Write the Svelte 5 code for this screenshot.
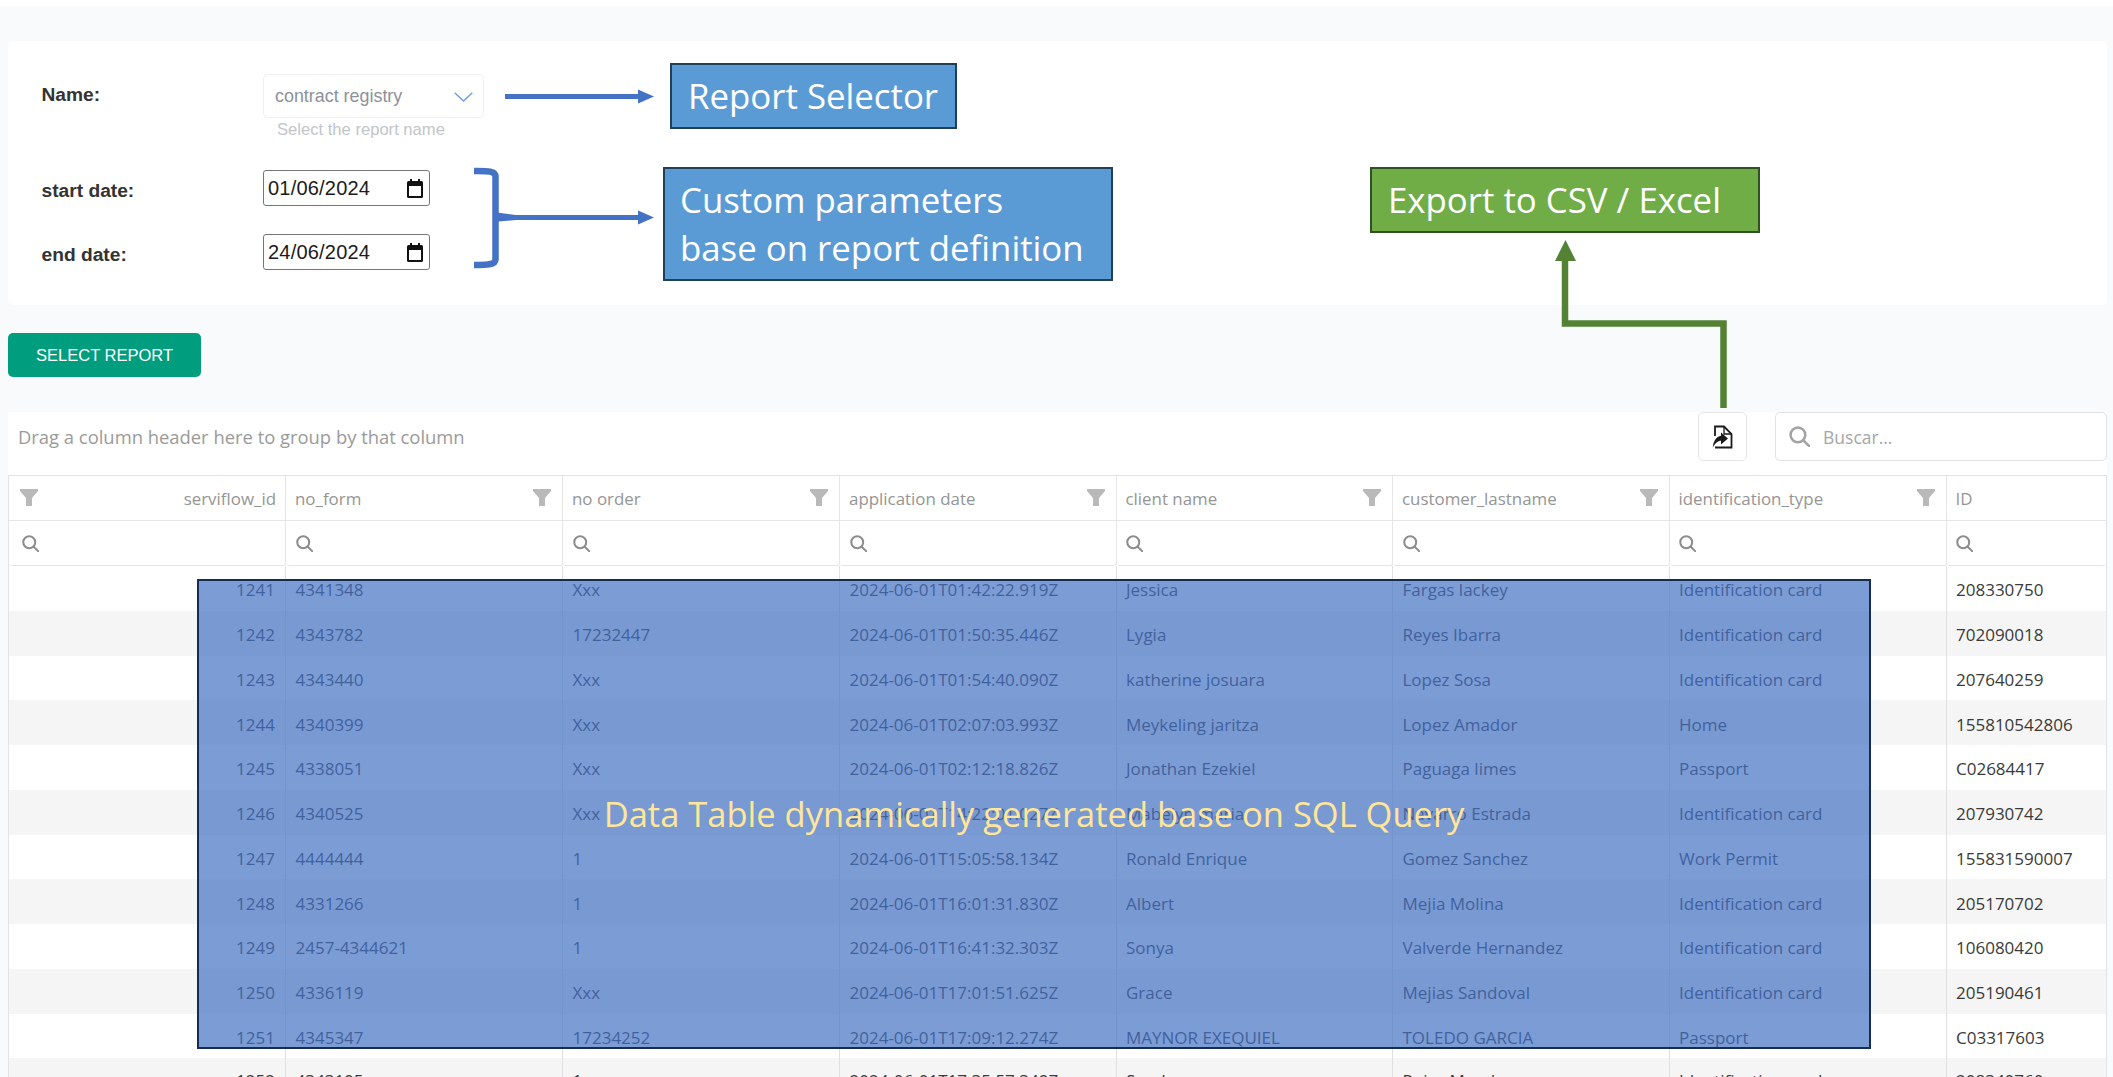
<script>
  const columns = [
    { name: 'serviflow_id', end: true },
    { name: 'no_form' },
    { name: 'no order' },
    { name: 'application date' },
    { name: 'client name' },
    { name: 'customer_lastname' },
    { name: 'identification_type' },
    { name: 'ID', plain: true }
  ];
  const rows = [
    ['1241','4341348','Xxx','2024-06-01T01:42:22.919Z','Jessica','Fargas lackey','Identification card','208330750'],
    ['1242','4343782','17232447','2024-06-01T01:50:35.446Z','Lygia','Reyes Ibarra','Identification card','702090018'],
    ['1243','4343440','Xxx','2024-06-01T01:54:40.090Z','katherine josuara','Lopez Sosa','Identification card','207640259'],
    ['1244','4340399','Xxx','2024-06-01T02:07:03.993Z','Meykeling jaritza','Lopez Amador','Home','155810542806'],
    ['1245','4338051','Xxx','2024-06-01T02:12:18.826Z','Jonathan Ezekiel','Paguaga limes','Passport','C02684417'],
    ['1246','4340525','Xxx','2024-06-01T14:22:01.027Z','Mabelyn maria','Navarro Estrada','Identification card','207930742'],
    ['1247','4444444','1','2024-06-01T15:05:58.134Z','Ronald Enrique','Gomez Sanchez','Work Permit','155831590007'],
    ['1248','4331266','1','2024-06-01T16:01:31.830Z','Albert','Mejia Molina','Identification card','205170702'],
    ['1249','2457-4344621','1','2024-06-01T16:41:32.303Z','Sonya','Valverde Hernandez','Identification card','106080420'],
    ['1250','4336119','Xxx','2024-06-01T17:01:51.625Z','Grace','Mejias Sandoval','Identification card','205190461'],
    ['1251','4345347','17234252','2024-06-01T17:09:12.274Z','MAYNOR EXEQUIEL','TOLEDO GARCIA','Passport','C03317603'],
    ['1252','4343105','1','2024-06-01T17:35:57.349Z','Sandra','Rojas Mendez','Identification card','208340760']
  ];
</script>

{#snippet search(size)}
  <svg class="mag" width={size} height={size} viewBox="0 0 20 20" fill="none" stroke="currentColor" stroke-width="2.4">
    <circle cx="8.5" cy="8.5" r="7" />
    <path d="M13.5 13.5 L19 19" stroke-linecap="round" />
  </svg>
{/snippet}

{#snippet funnel()}
  <svg class="funnel" width="18" height="17" viewBox="0 0 18 17"><path d="M0 0H18V2L12 9V17H6V9L0 2Z" /></svg>
{/snippet}

{#snippet calendar()}
  <svg class="cal" width="16" height="19" viewBox="0 0 16 19">
    <path d="M3 0h2v2h6V0h2v2h1.5A1.5 1.5 0 0 1 16 3.500V17.500A1.500 1.500 0 0 1 14.500 19H1.500A1.500 1.500 0 0 1 0 17.500V3.500A1.500 1.500 0 0 1 1.500 2H3ZM2 7V17H14V7Z" />
  </svg>
{/snippet}

<div class="page">
  <main class="content">
    <section class="card">
      <div class="label">Name:</div>
      <div>
        <div class="select">
          <span>contract registry</span>
          <svg width="19" height="10" viewBox="0 0 19 10" fill="none" stroke="#6a9fdf" stroke-width="1.400"><path d="M.7.7 9.500 9 18.300.7" /></svg>
        </div>
        <div class="hint">Select the report name</div>
      </div>
      <div class="label">start date:</div>
      <div class="date"><span>01/06/2024</span>{@render calendar()}</div>
      <div class="label">end date:</div>
      <div class="date"><span>24/06/2024</span>{@render calendar()}</div>
    </section>

    <button class="report-btn">SELECT REPORT</button>

    <section class="grid-wrap">
      <div class="toolbar">
        <div class="group-hint">Drag a column header here to group by that column</div>
        <button class="export" aria-label="Export">
          <svg width="21" height="24" viewBox="0 0 21 24">
            <path d="M3 11V1.500H12L19.500 9V22.500H3" fill="none" stroke="#1a1a1a" stroke-width="1.800" />
            <path d="M12 1.500V9H19.500" fill="none" stroke="#1a1a1a" stroke-width="1.300" />
            <path d="M9 7.500 16 13.500 9 19.500V15.800C6 15.800 3 18 .8 22.800 1.200 16 4.500 11.500 9 10.800Z" fill="#1a1a1a" />
          </svg>
        </button>
        <div class="searchbox">
          {@render search(21)}
          <span>Buscar...</span>
        </div>
      </div>

      <div class="table">
        <div class="tr head">
          {#each columns as c}
            <div class="th" class:end={c.end}>
              <span class="th-name">{c.name}</span>
              {#if !c.plain}{@render funnel()}{/if}
            </div>
          {/each}
        </div>
        <div class="tr filters">
          {#each columns as c}
            <div class="fc">{@render search(17)}</div>
          {/each}
        </div>
        {#each rows as row, i}
          <div class="tr body" class:alt={i % 2 === 1}>
            {#each row as cell, j}
              <div class="td" class:right={j === 0}>{cell}</div>
            {/each}
          </div>
        {/each}
      </div>
    </section>
  </main>

  <svg class="arrows" width="2113" height="1077" viewBox="0 0 2113 1077" fill="none">
    <path d="M505 96.500H640" stroke="#4472c4" stroke-width="5" />
    <path d="M638 89.500 654 96.500 638 103.500Z" fill="#4472c4" />
    <path d="M474 171C486 171 495.500 170.500 495.500 176.500V259.500C495.500 265 486 265 474 265" stroke="#4472c4" stroke-width="6.500" />
    <path d="M493 212 516 215V220L493 222Z" fill="#4472c4" />
    <path d="M515 217.500H640" stroke="#4472c4" stroke-width="5" />
    <path d="M638 210.500 654 217.500 638 224.500Z" fill="#4472c4" />
    <path d="M1723.500 408V323.500H1565V258" stroke="#548235" stroke-width="6.500" />
    <path d="M1565.500 240 1576 261H1555Z" fill="#548235" />
  </svg>

  <div class="note blue selector">Report Selector</div>
  <div class="note blue params">Custom parameters<br />base on report definition</div>
  <div class="note green exportnote">Export to CSV / Excel</div>
  <div class="shade">Data Table dynamically generated base on SQL Query</div>
</div>

<style>
  :global(body) {
    margin: 0;
    background: #fff;
  }
  .page {
    position: relative;
    width: 2113px;
    height: 1077px;
    overflow: hidden;
    padding-top: 6px;
    box-sizing: border-box;
  }
  .content {
    height: 1071px;
    background: #f9fafc;
    padding: 35px 6px 0 8px;
    box-sizing: border-box;
    display: flex;
    flex-direction: column;
    align-items: flex-start;
    overflow: hidden;
  }
  .card {
    width: 100%;
    height: 264px;
    flex: none;
    box-sizing: border-box;
    background: #fff;
    border-radius: 5px;
    padding: 33px 0 0 33.500px;
    display: grid;
    grid-template-columns: 221.500px 1fr;
    grid-template-rows: 96px 36px 64px;
    font-family: "Liberation Sans", Arial, sans-serif;
  }
  .card > :nth-child(n + 5) {
    margin-top: 28px;
  }
  .label {
    font-weight: 700;
    font-size: 19.200px;
    color: #333;
    line-height: 22px;
    padding-top: 10px;
  }
  .select {
    width: 221px;
    height: 44px;
    box-sizing: border-box;
    border: 1px solid #eef0f2;
    border-radius: 5px;
    display: flex;
    align-items: center;
    justify-content: space-between;
    padding: 1px 10px 0 11px;
    font-size: 17.900px;
    color: #8c919b;
  }
  .hint {
    margin: 2px 0 0 14px;
    font-size: 16.600px;
    line-height: 20px;
    color: #c2c5c9;
  }
  .date {
    width: 167px;
    height: 36px;
    box-sizing: border-box;
    border: 1px solid #767676;
    border-radius: 3px;
    display: flex;
    align-items: center;
    justify-content: space-between;
    padding: 0 6px 0 4px;
    font-size: 20px;
    color: #1b1b1b;
    letter-spacing: 0.2px;
    background: #fff;
  }
  .cal {
    fill: #111;
  }
  .report-btn {
    flex: none;
    margin-top: 28px;
    width: 193px;
    height: 44px;
    border: 0;
    border-radius: 5px;
    background: #009e7f;
    color: #fff;
    font-family: "Liberation Sans", Arial, sans-serif;
    font-size: 16.500px;
    padding: 0;
  }
  .grid-wrap {
    flex: none;
    width: 100%;
    margin-top: 35px;
    background: #fff;
    font-family: "Open Sans", sans-serif;
  }
  .toolbar {
    height: 63px;
    box-sizing: border-box;
    display: flex;
    align-items: flex-start;
  }
  .group-hint {
    flex: 1;
    height: 48px;
    display: flex;
    align-items: center;
    padding-left: 10px;
    font-size: 18.400px;
    color: #9a9a9a;
  }
  .export {
    width: 49px;
    height: 49px;
    box-sizing: border-box;
    padding: 0;
    background: #fff;
    border: 1.500px solid #e6e6e6;
    border-radius: 5px;
    display: flex;
    align-items: center;
    justify-content: center;
  }
  .searchbox {
    width: 332px;
    height: 49px;
    margin-left: 28px;
    box-sizing: border-box;
    border: 1.500px solid #e2e2e2;
    border-radius: 5px;
    display: flex;
    align-items: center;
    padding-left: 13px;
    gap: 13px;
    font-size: 17.500px;
    color: #a6a6a6;
  }
  .searchbox .mag {
    color: #a3a3a3;
  }
  .table {
    border: solid #e3e3e3;
    border-width: 1.500px 1.500px 0 1.500px;
    box-sizing: border-box;
    color: #3a3a3a;
  }
  .tr {
    display: grid;
    grid-template-columns: 277px 277px 277px 276.500px 276.500px 276.500px 277px 1fr;
    box-sizing: border-box;
  }
  .head {
    height: 45px;
    border-bottom: 1.500px solid #e6e6e6;
  }
  .th {
    display: flex;
    align-items: center;
    justify-content: space-between;
    padding: 0 11px 0 9px;
    border-right: 1.500px solid #e6e6e6;
    font-size: 16.900px;
    color: #959595;
    box-sizing: border-box;
    min-width: 0;
  }
  .th:last-child {
    border-right: 0;
  }
  .th.end {
    flex-direction: row-reverse;
    padding: 0 9px 0 11px;
  }
  .funnel {
    fill: #b9b9b9;
    margin-top: -1px;
  }
  .filters {
    height: 45px;
  }
  .fc {
    display: flex;
    align-items: center;
    padding: 1px 0 0 9.500px;
    box-sizing: border-box;
    border: 1.500px solid #e6e6e6;
    border-width: 0 1.500px 1.500px 0;
    border-radius: 0 0 3px 3px;
    color: #8c8c8c;
  }
  .fc:first-child {
    padding-left: 12.500px;
  }
  .fc:last-child {
    border-right: 0;
  }
  .body {
    height: 44.750px;
    background: #fff;
  }
  .body.alt {
    background: #f5f5f5;
  }
  .td {
    border-right: 1px solid #e0e0e0;
    padding: 3px 9.500px 0;
    font-size: 17px;
    display: flex;
    align-items: center;
    box-sizing: border-box;
    white-space: nowrap;
  }
  .td:last-child {
    border-right: 0;
  }
  .td.right {
    justify-content: flex-end;
    padding-right: 10px;
  }
  .body:last-child .td {
    padding-top: 0;
  }
  .arrows {
    position: absolute;
    inset: 0;
    pointer-events: none;
  }
  .note {
    position: absolute;
    box-sizing: border-box;
    color: #fff;
    font-family: "Open Sans", sans-serif;
    font-size: 34.800px;
    line-height: 47.500px;
    white-space: nowrap;
    border: 2px solid;
  }
  .blue {
    background: #5b9bd5;
    border-color: #223f59;
  }
  .green {
    background: #70ad47;
    border-color: #2f5220;
    left: 1370px;
    top: 167px;
    width: 390px;
    height: 66px;
    padding: 7px 0 0 16px;
  }
  .selector {
    left: 670px;
    top: 63px;
    width: 287px;
    height: 66px;
    padding: 7px 0 0 16px;
  }
  .params {
    left: 663px;
    top: 167px;
    width: 450px;
    height: 114px;
    padding: 7px 0 0 15px;
  }
  .shade {
    position: absolute;
    left: 197px;
    top: 579px;
    width: 1674px;
    height: 470px;
    box-sizing: border-box;
    background: rgba(68, 114, 196, 0.7);
    border: 2.500px solid #172c51;
    display: flex;
    align-items: center;
    justify-content: center;
    padding-bottom: 2px;
    color: #ffe699;
    font-family: "Open Sans", sans-serif;
    font-size: 34.500px;
    white-space: nowrap;
  }
</style>
